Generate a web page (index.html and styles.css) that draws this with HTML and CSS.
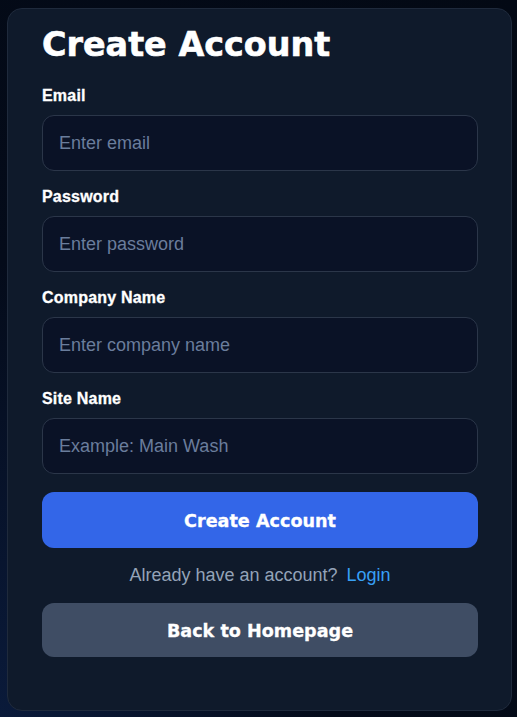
FILE: index.html
```html
<!DOCTYPE html>
<html lang="en">
<head>
<meta charset="utf-8">
<title>Create Account</title>
<link rel="stylesheet" href="styles.css">
</head>
<body>
<main class="card">
  <h1 class="title">Create Account</h1>
  <form class="form">
    <div class="field">
      <label class="label" for="email">Email</label>
      <input class="input" id="email" type="email" placeholder="Enter email">
    </div>
    <div class="field">
      <label class="label" for="password">Password</label>
      <input class="input" id="password" type="password" placeholder="Enter password">
    </div>
    <div class="field">
      <label class="label" for="company">Company Name</label>
      <input class="input" id="company" type="text" placeholder="Enter company name">
    </div>
    <div class="field">
      <label class="label" for="site">Site Name</label>
      <input class="input" id="site" type="text" placeholder="Example: Main Wash">
    </div>
    <button class="btn btn-primary" type="button">Create Account</button>
    <p class="alt">Already have an account? <a class="link" href="#">Login</a></p>
    <button class="btn btn-secondary" type="button">Back to Homepage</button>
  </form>
</main>
</body>
</html>
```

FILE: styles.css
```css
html, body {
  margin: 0;
  height: 100%;
}
body {
  background: radial-gradient(ellipse at 0% 100%, #0a1a3a 0%, #040b1a 45%, #030914 100%);
  font-family: "Liberation Sans", Arial, sans-serif;
  padding: 8px 5px 6px 7px;
  box-sizing: border-box;
}
.card {
  box-sizing: border-box;
  height: 703px;
  background: #0f1a2b;
  border: 1px solid #1f2a3c;
  border-radius: 15px;
  padding: 16px 33px 0 34px;
}
.title {
  margin: 0;
  color: #ffffff;
  font-family: "DejaVu Sans", "Liberation Sans", sans-serif;
  font-size: 33.4px;
  font-weight: 700;
  line-height: 40px;
  -webkit-text-stroke: 0.6px #ffffff;
}
.form {
  display: flex;
  flex-direction: column;
  margin-top: 21px;
}
.field {
  display: flex;
  flex-direction: column;
  margin-bottom: 16px;
}
.label {
  color: #ffffff;
  font-size: 16px;
  font-weight: 700;
  line-height: 18px;
  margin-top: 1px;
  margin-bottom: 10px;
  letter-spacing: 0.2px;
  -webkit-text-stroke: 0.3px #ffffff;
}
.input {
  box-sizing: border-box;
  height: 56px;
  background: #0a1226;
  border: 1px solid #2b3649;
  border-radius: 12px;
  padding: 0 16px;
  font-family: "Liberation Sans", Arial, sans-serif;
  font-size: 18px;
  color: #e2e8f0;
  outline: none;
}
.input::placeholder {
  color: #6a7d9c;
}
.btn {
  box-sizing: border-box;
  width: 100%;
  border: 0;
  border-radius: 12px;
  color: #ffffff;
  font-family: "DejaVu Sans", "Liberation Sans", sans-serif;
  font-size: 17.6px;
  font-weight: 700;
  padding-top: 2px;
  -webkit-text-stroke: 0.3px #ffffff;
}
.btn-primary {
  height: 56px;
  margin-top: 2px;
  background: #3366e8;
}
.btn-secondary {
  height: 54px;
  background: #3f4d64;
}
.alt {
  margin: 17px 0 17px;
  text-align: center;
  color: #94a3b8;
  font-size: 18px;
  line-height: 21px;
}
.link {
  color: #38a0f5;
  text-decoration: none;
  margin-left: 4px;
}
```
